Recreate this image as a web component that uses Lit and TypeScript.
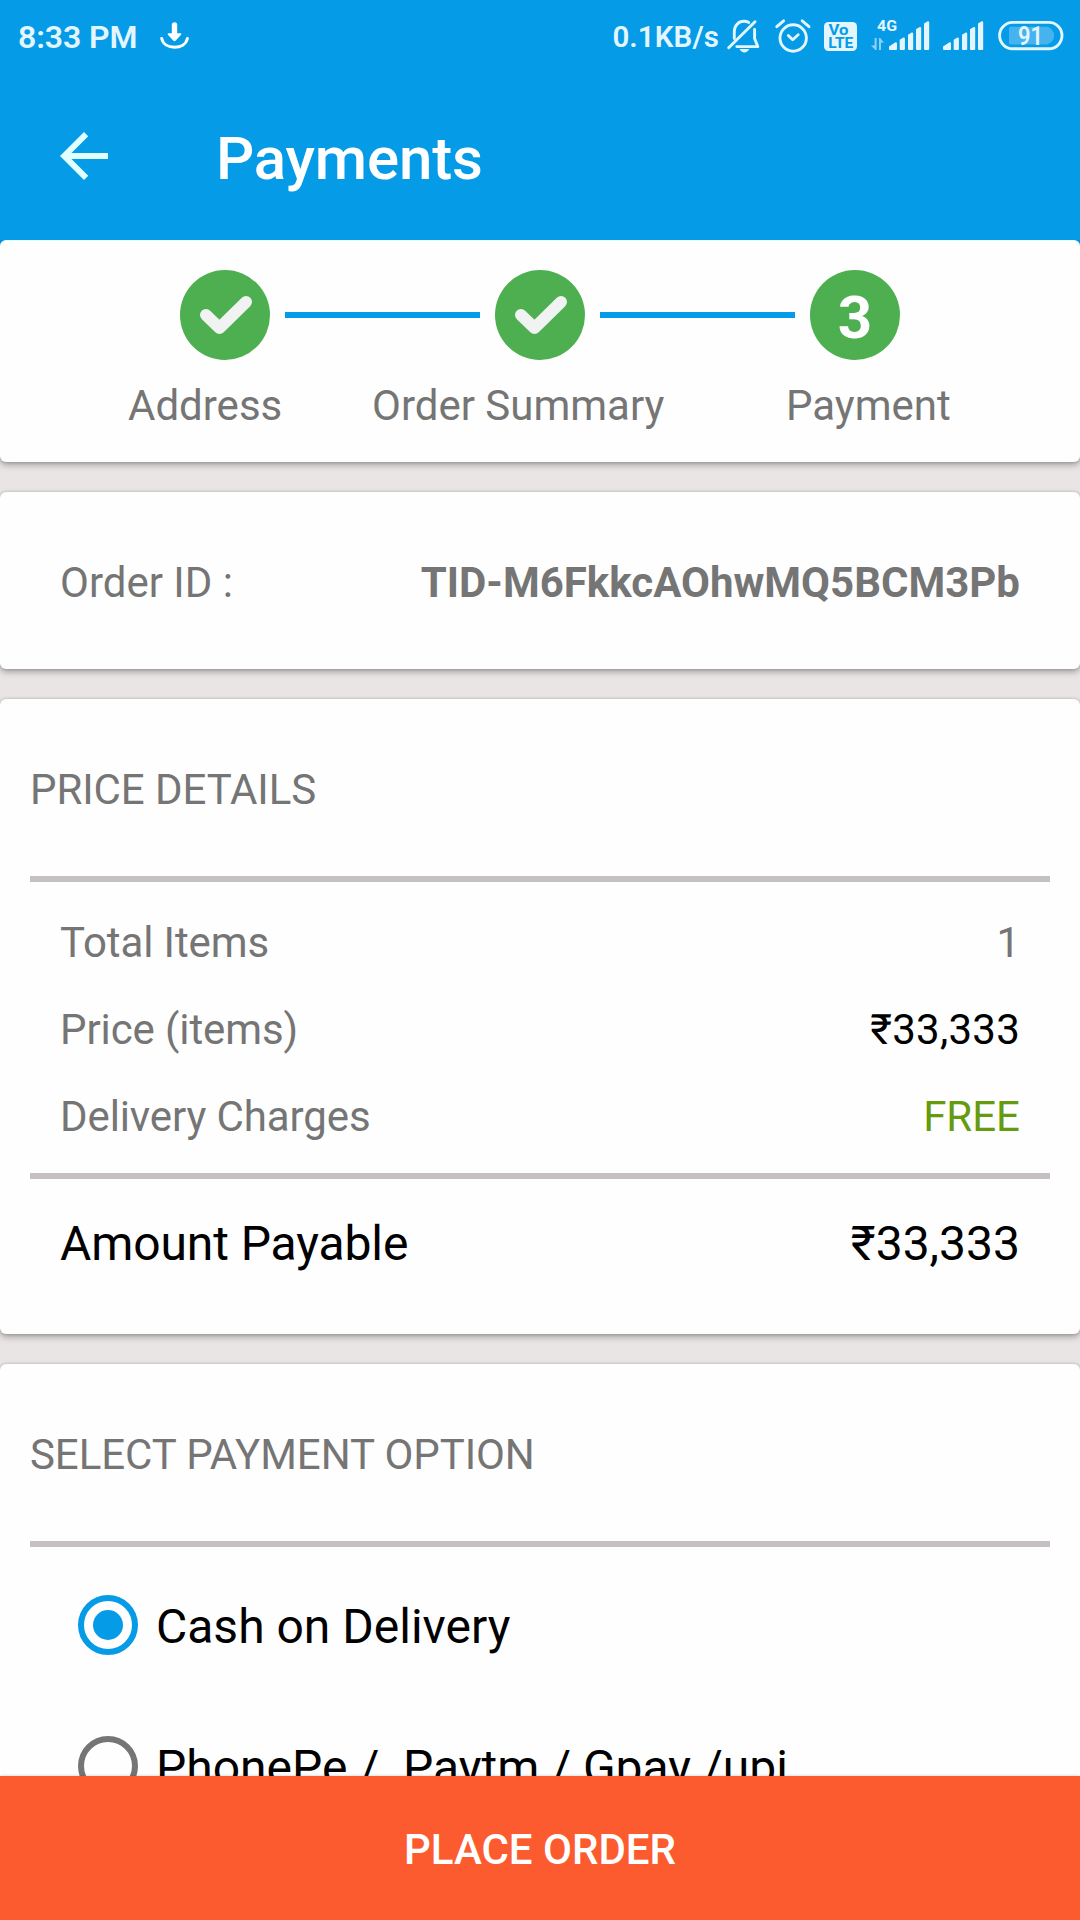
import { LitElement, html, css, svg, nothing } from "lit";
import { customElement, property, state } from "lit/decorators.js";

@customElement("status-bar")
class StatusBar extends LitElement {
  static styles = css`
    :host {
      display: block;
      height: 72px;
      color: #e3f6ff;
    }
    .bar {
      display: flex;
      height: 72px;
      align-items: flex-start;
      padding: 0 17px 0 18px;
    }
    .time {
      font-size: 32px;
      font-weight: 600;
      line-height: 37px;
      padding-top: 19px;
      width: 142px;
      letter-spacing: -0.1px;
      white-space: nowrap;
    }
    .right {
      display: flex;
      margin-left: auto;
    }
    .speed {
      font-size: 29.5px;
      font-weight: 600;
      line-height: 35px;
      padding-top: 20px;
      margin-right: 8px;
      letter-spacing: 0.1px;
      white-space: nowrap;
    }
    svg {
      display: block;
      height: 72px;
      overflow: visible;
    }
    .bell { width: 32px; margin-right: 16px; }
    .alarm { width: 35px; margin-right: 14px; }
    .volte { width: 33px; margin-right: 14px; }
    .sim1 { width: 58px; margin-right: 14px; }
    .sim2 { width: 40px; margin-right: 15px; }
    .battery { width: 65px; }
    .line {
      fill: none;
      stroke: #e3f6ff;
      stroke-width: 2.9;
      stroke-linecap: round;
      stroke-linejoin: round;
    }
    .solid { fill: #e3f6ff; }
    .white { fill: #fff; }
    .tray {
      fill: none;
      stroke: #fff;
      stroke-width: 3;
      stroke-linecap: round;
    }
    .faint { fill: #8fd0f6; }
    .charge { fill: #46b3ee; }
    .cut { fill: #059be7; font-weight: 700; }
    text { font-family: Roboto, "Liberation Sans", sans-serif; }
    .net { font-size: 15.5px; font-weight: 700; fill: #e3f6ff; }
    .level { font-size: 26px; font-weight: 600; fill: #e3f6ff; }
  `;

  private bars(x: number) {
    const tops = [42, 37.3, 32.3, 26.7, 21];
    const lefts = [0, 10.7, 19, 27, 35];
    return tops.map((t, i) => {
      const l = x + lefts[i];
      const r = l + (i === 0 ? 8 : 5.2);
      const drop = i === 0 ? 4.5 : 2.5;
      return svg`<path class="solid" d="M${l} ${t + drop} L${r - 1.5} ${t + 0.3} Q${r} ${t} ${r} ${t + 1.5} V49 Q${r} 50 ${r - 1} 50 H${l + 1} Q${l} 50 ${l} 49 Z"></path>`;
    });
  }

  render() {
    return html`
      <div class="bar">
        <div class="time">8:33 PM</div>
        <svg width="29" viewBox="160 0 29 72">
          <path class="white" d="M171.8 25a2.7 2.7 0 0 1 5.4 0v8.2h3.3q1.6.2.6 1.5l-5.3 5.8q-1.3 1.3-2.6 0l-5.3-5.8q-1-1.3.6-1.5h3.3z"></path>
          <path class="tray" d="M161.7 38.5C163 44.5 168.5 47.2 174.5 47.2S186 44.5 187.4 38.5"></path>
        </svg>
        <div class="right">
          <div class="speed">0.1KB/s</div>
          <svg class="bell" viewBox="727 0 32 72">
            <path class="line" d="M734.3 38.5V31.5C734.3 25.5 738.5 21.3 744 21.3C745.8 21.3 747.4 21.7 748.8 22.5"></path>
            <path class="line" d="M754.6 29.5V38.5L757.8 46.6H736.8"></path>
            <path class="line" d="M728.7 47.7L755 21.8"></path>
            <path class="solid" d="M739.5 49h9.8q-1.8 3.4-4.9 3.4t-4.9-3.4z"></path>
          </svg>
          <svg class="alarm" viewBox="775 0 35 72">
            <circle class="line" cx="793.2" cy="38" r="13.2"></circle>
            <path class="line" d="M788.3 35.5L792.7 39.8L798.2 34.8"></path>
            <path class="line" d="M776.8 26.7L783.6 20.8M802.2 20.8L809 26.7"></path>
          </svg>
          <svg class="volte" viewBox="824 0 33 72">
            <rect class="solid" x="824" y="22" width="33" height="29" rx="4.5"></rect>
            <text class="cut" x="828.5" y="35" font-size="14.5" textLength="20" lengthAdjust="spacingAndGlyphs">Vo</text>
            <text class="cut" x="828.3" y="48" font-size="14" textLength="25" lengthAdjust="spacingAndGlyphs">LTE</text>
          </svg>
          <svg class="sim1" viewBox="871 0 58 72">
            <text class="net" x="877" y="31" textLength="20" lengthAdjust="spacingAndGlyphs">4G</text>
            <path class="faint" d="M874.6 38h2v12h-1.2l-4.4-4.6h3.6zM879 50V38h1.2l3.8 4.6h-3V50z"></path>
            ${this.bars(889)}
          </svg>
          <svg class="sim2" viewBox="943 0 40 72">${this.bars(943)}</svg>
          <svg class="battery" viewBox="998 0 65 72">
            <rect class="line" x="999.6" y="22.4" width="62.4" height="26.4" rx="13.2"></rect>
            <path class="charge" d="M1010.5 26.8H1047a9 9 0 0 1 0 17.6h-36.5q-1.5 0-1.5-1.5V28.3q0-1.5 1.5-1.5z"></path>
            <text class="level" x="1018" y="44.8" textLength="25" lengthAdjust="spacingAndGlyphs">91</text>
          </svg>
        </div>
      </div>
    `;
  }
}

@customElement("step-tracker")
class StepTracker extends LitElement {
  @property({ type: Number }) current = 3;

  static styles = css`
    :host { display: block; }
    .track {
      display: flex;
      align-items: center;
      gap: 15px;
      padding: 30px 180px 0;
    }
    .dot {
      display: flex;
      align-items: center;
      justify-content: center;
      width: 90px;
      height: 90px;
      border-radius: 50%;
      background: #4eaf51;
      color: #fff;
      font-size: 60px;
      font-weight: 700;
      line-height: 70px;
    }
    .num { padding-top: 5px; }
    .check {
      fill: none;
      stroke: #f1f2f2;
      stroke-width: 12;
      stroke-linecap: round;
      stroke-linejoin: round;
    }
    .link {
      flex: 1;
      height: 6px;
      background: #059be7;
    }
    .labels {
      display: grid;
      grid-template-columns: 244px 414px auto;
      justify-content: start;
      padding: 17px 0 0 128px;
      color: #757575;
      font-size: 42px;
      line-height: 57px;
      white-space: nowrap;
    }
  `;

  render() {
    const steps = ["Address", "Order Summary", "Payment"];
    return html`
      <div class="track">
        ${steps.map(
          (_, i) => html`
            ${i > 0 ? html`<div class="link"></div>` : nothing}
            <div class="dot">
              ${i + 1 < this.current
                ? html`<svg width="90" height="90" viewBox="0 0 90 90">
                    <path class="check" d="M26 45L39.5 58L66 32"></path>
                  </svg>`
                : html`<span class="num">${i + 1}</span>`}
            </div>
          `
        )}
      </div>
      <div class="labels">${steps.map((s) => html`<span>${s}</span>`)}</div>
    `;
  }
}

@customElement("app-root")
class AppRoot extends LitElement {
  @state() private selected = 0;

  private options = ["Cash on Delivery", "PhonePe /  Paytm / Gpay /upi"];

  static styles = css`
    :host {
      display: block;
      font-family: Roboto, "Liberation Sans", sans-serif;
    }
    .screen {
      display: flex;
      flex-direction: column;
      width: 1080px;
      height: 1920px;
      overflow: hidden;
      background: #e9e5e4;
    }
    .top { background: #059be7; }
    .toolbar {
      display: flex;
      align-items: center;
      height: 168px;
      padding-left: 48px;
    }
    .back { fill: #e0ffff; }
    .title {
      margin: 0 0 0 96px;
      padding-top: 6px;
      color: #fff;
      font-size: 60px;
      font-weight: 500;
      letter-spacing: -0.15px;
      line-height: 70px;
    }
    .content {
      display: flex;
      flex-direction: column;
      gap: 30px;
      flex: 1;
      min-height: 0;
      overflow: hidden;
      background: linear-gradient(#059be7 8px, #e9e5e4 8px);
    }
    .card {
      flex: none;
      box-sizing: border-box;
      border-radius: 6px;
      background: #fefefe;
      box-shadow: 0 3px 6px rgba(0, 0, 0, 0.3), 0 0 3px rgba(0, 0, 0, 0.2);
    }
    .steps {
      height: 222px;
      border-top: 1px solid #e0ffff;
    }
    .steps step-tracker { margin-top: -1px; }
    .order {
      display: flex;
      justify-content: space-between;
      height: 177px;
      padding: 62px 60px 0;
      color: #757575;
      font-size: 42px;
      line-height: 57px;
    }
    .order b { font-weight: 700; }
    .price { height: 635px; }
    .heading {
      margin: 0 30px;
      padding: 62px 0 58px;
      border-bottom: 6px solid #c5c1c1;
      color: #757575;
      font-size: 42px;
      font-weight: 400;
      letter-spacing: -0.08px;
      line-height: 57px;
    }
    .rows {
      display: flex;
      flex-direction: column;
      gap: 30px;
      margin: 0 30px;
      padding: 32px 30px 28px;
      border-bottom: 6px solid #c5c1c1;
      color: #757575;
      font-size: 42px;
      line-height: 57px;
    }
    .row {
      display: flex;
      justify-content: space-between;
    }
    .row span:first-child { letter-spacing: -0.1px; }
    .row .black {
      color: #000;
      letter-spacing: 0.25px;
    }
    .free { color: #669a0f; }
    .total {
      padding: 33px 60px 0;
      color: #000;
      font-size: 48px;
      line-height: 64px;
    }
    .pay { height: 700px; }
    .option {
      display: flex;
      align-items: center;
      height: 141px;
      padding-left: 78px;
      gap: 18px;
      font-size: 48px;
      line-height: 64px;
      white-space: pre;
      color: #000;
    }
    .options { padding-top: 7.5px; }
    .label { padding-top: 3px; }
    .radio {
      display: flex;
      align-items: center;
      justify-content: center;
      box-sizing: border-box;
      width: 60px;
      height: 60px;
      border: 6px solid #757575;
      border-radius: 50%;
    }
    .radio.on { border-color: #059be7; }
    .radio.on::after {
      content: "";
      width: 30px;
      height: 30px;
      border-radius: 50%;
      background: #059be7;
    }
    .place {
      flex: none;
      height: 144px;
      padding: 3px 0 0;
      border: 0;
      background: #fc5b2f;
      color: #fff;
      font: 500 42px/57px Roboto, "Liberation Sans", sans-serif;
      box-shadow: 0 0 3px rgba(0, 0, 0, 0.2);
      z-index: 1;
    }
  `;

  render() {
    return html`
      <div class="screen">
        <header class="top">
          <status-bar></status-bar>
          <div class="toolbar">
            <svg class="back" width="72" height="72" viewBox="0 0 24 24">
              <path d="M20 11H7.83l5.59-5.59L12 4l-8 8 8 8 1.41-1.41L7.83 13H20v-2z"></path>
            </svg>
            <h1 class="title">Payments</h1>
          </div>
        </header>
        <main class="content">
          <section class="card steps"><step-tracker .current=${3}></step-tracker></section>
          <section class="card order">
            <span>Order ID :</span><b>TID-M6FkkcAOhwMQ5BCM3Pb</b>
          </section>
          <section class="card price">
            <div class="heading">PRICE DETAILS</div>
            <div class="rows">
              <div class="row"><span>Total Items</span><span>1</span></div>
              <div class="row"><span>Price (items)</span><span class="black">₹33,333</span></div>
              <div class="row"><span>Delivery Charges</span><span class="free">FREE</span></div>
            </div>
            <div class="row total"><span>Amount Payable</span><span>₹33,333</span></div>
          </section>
          <section class="card pay">
            <div class="heading">SELECT PAYMENT OPTION</div>
            <div class="options">
              ${this.options.map(
                (o, i) => html`<div class="option" @click=${() => (this.selected = i)}><span class="radio ${i === this.selected ? "on" : ""}"></span><span class="label">${o}</span></div>`
              )}
            </div>
          </section>
        </main>
        <button class="place">PLACE ORDER</button>
      </div>
    `;
  }
}
